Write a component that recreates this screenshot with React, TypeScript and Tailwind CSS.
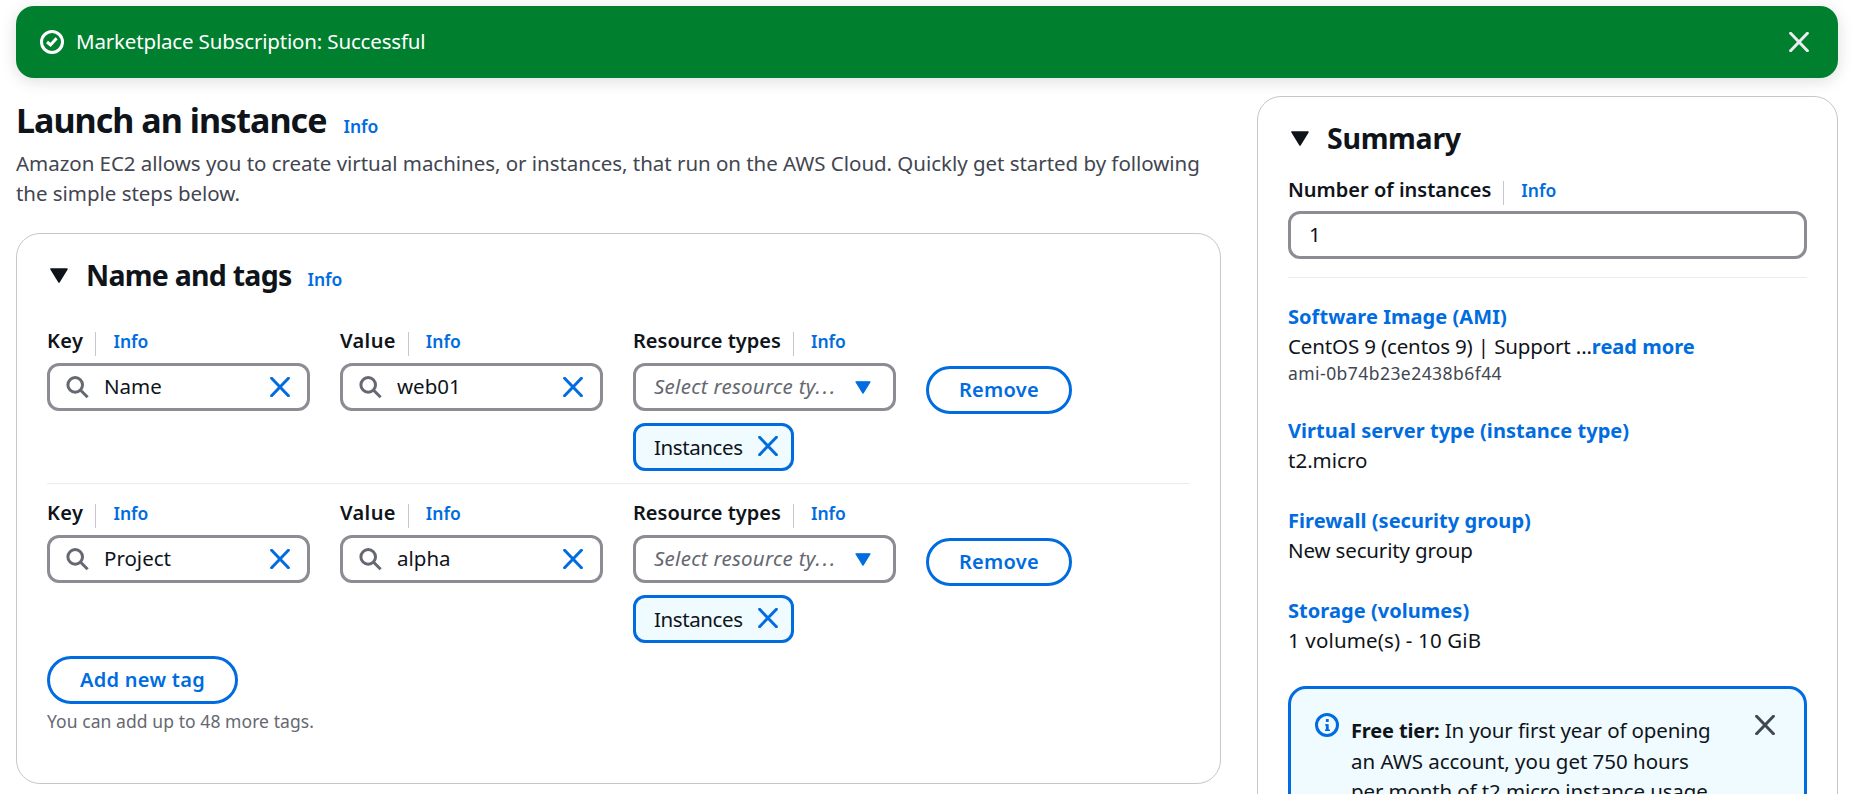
import type { ReactNode } from "react";

function CloseIcon({ className }: { className: string }) {
  return (
    <svg viewBox="0 0 20 20" className={`h-5 w-5 shrink-0 ${className}`} fill="none" stroke="currentColor" strokeWidth="3" strokeLinecap="round">
      <path d="M1.6 1.3 18.4 18.7M18.4 1.3 1.6 18.7" />
    </svg>
  );
}

function SearchIcon() {
  return (
    <svg viewBox="0 0 24 24" className="h-6 w-6 shrink-0 text-[#656871]" fill="none" stroke="currentColor" strokeWidth="3">
      <circle cx="9.2" cy="9.9" r="7.3" />
      <path d="M14.4 15 21.6 22.2" />
    </svg>
  );
}

function CheckCircleIcon() {
  return (
    <svg viewBox="0 0 24 24" className="h-6 w-6 shrink-0 text-white" fill="none" stroke="currentColor" strokeWidth="3">
      <circle cx="12" cy="12" r="10.5" />
      <path d="M7 12 10.5 15 16.6 8.2" />
    </svg>
  );
}

function InfoCircleIcon() {
  return (
    <svg viewBox="0 0 24 24" className="h-6 w-6 shrink-0 text-[#006ce0]" fill="none" stroke="currentColor" strokeWidth="3">
      <circle cx="12" cy="12" r="10.5" />
      <path d="M12.3 18v-6.8M12.3 6v3" strokeWidth="2.8" />
      <path d="M10 11.9h2.5M10 17.2h5" strokeWidth="1.4" />
    </svg>
  );
}

function Caret({ className }: { className: string }) {
  return (
    <svg viewBox="0 0 18 15" className={`shrink-0 ${className}`} fill="currentColor" stroke="currentColor" strokeWidth="1.5" strokeLinejoin="round">
      <path d="M1 1H17L9 14Z" />
    </svg>
  );
}

function InfoLink({ className = "" }: { className?: string }) {
  return <a className={`text-[17.5px] font-semibold text-[#006ce0] ${className}`}>Info</a>;
}

function FieldLabel({ children }: { children: ReactNode }) {
  return (
    <div className="flex h-[31px] items-baseline pt-px leading-[30px]">
      <span className="text-[20px] font-semibold text-[#0f141a]">{children}</span>
      <span className="ml-3 h-6 w-px self-end bg-[#c6c6cd]" />
      <InfoLink className="ml-[17px]" />
    </div>
  );
}

function SearchField({ label, value }: { label: ReactNode; value: string }) {
  return (
    <div className="w-[263px]">
      <FieldLabel>{label}</FieldLabel>
      <div className="mt-[7px] flex h-12 items-center rounded-xl border-[3px] border-[#8c8c94] bg-white pl-4 pr-[17px]">
        <SearchIcon />
        <span className="ml-[14px] flex-1 pb-[2px] leading-[30px] text-[#0f141a]">{value}</span>
        <CloseIcon className="text-[#006ce0]" />
      </div>
    </div>
  );
}

function TagRow({ name, value }: { name: string; value: string }) {
  return (
    <div className="flex gap-[30px]">
      <SearchField label={<span className="tracking-[0.4px]">Key</span>} value={name} />
      <SearchField label={<span className="tracking-[0.35px]">Value</span>} value={value} />
      <div className="w-[263px]">
        <FieldLabel>Resource types</FieldLabel>
        <div className="mt-[7px] flex h-12 items-center justify-between rounded-xl border-[3px] border-[#8c8c94] bg-white pl-[18px] pr-[22px]">
          <span className="whitespace-nowrap pb-[2px] italic leading-[30px] tracking-[0.27px] text-[#656871]">
            Select resource ty<span className="tracking-[2px]">...</span>
          </span>
          <Caret className="h-[13px] w-4 text-[#006ce0]" />
        </div>
        <div className="mt-3 flex h-12 w-[161px] items-center justify-between rounded-xl border-[3px] border-[#006ce0] bg-[#f0fbff] pl-[18px] pr-[13px]">
          <span className="leading-[30px] tracking-[-0.4px] text-[#0f141a]">Instances</span>
          <CloseIcon className="mb-[3px] text-[#006ce0]" />
        </div>
      </div>
      <button className="mt-[41px] h-12 w-[146px] rounded-full border-[3px] border-[#006ce0] text-[20px] font-semibold leading-[30px] tracking-[0.28px] text-[#006ce0]">
        Remove
      </button>
    </div>
  );
}

function SummaryItem({ title, children, className = "" }: { title: string; children: ReactNode; className?: string }) {
  return (
    <div className={`leading-[30px] ${className}`}>
      <div className="h-[30px] pt-px text-[20px] font-bold tracking-[0.05px] text-[#006ce0]">{title}</div>
      {children}
    </div>
  );
}

export default function App() {
  return (
    <div className="h-[794px] w-[1854px] overflow-hidden bg-white pl-4 pt-[6px] font-['Noto_Sans',sans-serif] text-[20.5px] text-[#0f141a]">
      <div className="flex h-[72px] w-[1822px] items-center rounded-[18px] bg-[#00802f] pl-6 pr-[29px] shadow-[0_3px_15px_1px_rgba(0,7,22,0.12)]">
        <CheckCircleIcon />
        <span className="ml-3 flex-1 pb-[3px] leading-[30px] tracking-[-0.17px] text-white">
          Marketplace Subscription: Successful
        </span>
        <CloseIcon className="text-[#ebebf0]" />
      </div>

      <div className="flex gap-9">
        <main className="w-[1205px] pt-5">
          <div className="flex h-[45px] items-baseline leading-[45px]">
            <h1 className="text-[34px] font-bold tracking-[-0.96px]">Launch an instance</h1>
            <InfoLink className="ml-[17px]" />
          </div>
          <p className="mt-[5px] h-[60px] whitespace-nowrap leading-[30px] tracking-[-0.035px] text-[#424650]">
            Amazon EC2 allows you to create virtual machines, or instances, that run on the AWS Cloud. Quickly get started by following
            <br />
            the simple steps below.
          </p>

          <section className="mt-[25px] h-[551px] rounded-3xl border border-[#c6c6cd] px-[30px] pt-[23px]">
            <div className="flex h-9 items-baseline leading-9">
              <Caret className="ml-[3px] h-[15px] w-[18px] -translate-y-[3px]" />
              <h2 className="ml-[18px] text-[28.5px] font-bold tracking-[-0.75px]">Name and tags</h2>
              <InfoLink className="ml-4" />
            </div>
            <div className="mt-8">
              <TagRow name="Name" value="web01" />
            </div>
            <div className="mb-[13px] mt-3 h-px bg-[#ebebf0]" />
            <TagRow name="Project" value="alpha" />
            <button className="mt-[13px] block h-12 w-[191px] rounded-full border-[3px] border-[#006ce0] text-[20px] font-semibold leading-[30px] tracking-[0.28px] text-[#006ce0]">
              Add new tag
            </button>
            <p className="mt-[5px] text-[17.5px] leading-6 tracking-[0.07px] text-[#656871]">You can add up to 48 more tags.</p>
          </section>
        </main>

        <aside className="mt-[18px] h-[760px] w-[581px] rounded-3xl border border-[#c6c6cd] px-[30px] pt-[23px]">
          <div className="flex h-9 items-baseline leading-9">
            <Caret className="ml-[3px] h-[15px] w-[18px] -translate-y-[3px]" />
            <h2 className="ml-[18px] text-[28.5px] font-bold tracking-[-0.3px]">Summary</h2>
          </div>
          <div className="mt-[18px]">
            <FieldLabel>Number of instances</FieldLabel>
          </div>
          <div className="mt-[6px] h-12 rounded-xl border-[3px] border-[#8c8c94] pl-[18px] pt-[5px] leading-[30px]">1</div>
          <div className="mt-[18px] h-px bg-[#ebebf0]" />

          <SummaryItem title="Software Image (AMI)" className="mt-[23px]">
            <div className="h-[30px]">
              <span className="tracking-[-0.14px]">CentOS 9 (centos 9) | Support ...</span>
              <span className="text-[20px] font-bold text-[#006ce0]">read more</span>
            </div>
            <div className="text-[17.5px] leading-6 tracking-[0.45px] text-[#424650]">ami-0b74b23e2438b6f44</div>
          </SummaryItem>
          <SummaryItem title="Virtual server type (instance type)" className="mt-[30px]">
            <div>t2.micro</div>
          </SummaryItem>
          <SummaryItem title="Firewall (security group)" className="mt-[30px]">
            <div className="tracking-[-0.15px]">New security group</div>
          </SummaryItem>
          <SummaryItem title="Storage (volumes)" className="mt-[30px]">
            <div className="tracking-[0.15px]">1 volume(s) - 10 GiB</div>
          </SummaryItem>

          <div className="mt-[31px] flex h-[240px] items-start rounded-[18px] border-[3px] border-[#006ce0] bg-[#f0fbff] pl-6 pr-[29px] pt-6">
            <InfoCircleIcon />
            <p className="ml-3 mt-[2px] flex-1 whitespace-nowrap leading-[30px] tracking-[-0.13px]">
              <span className="text-[20px] font-bold">Free tier:</span> In your first year of opening
              <br />
              <span className="tracking-[-0.03px]">an AWS account, you get 750 hours</span>
              <br />
              per month of t2.micro instance usage
            </p>
            <CloseIcon className="mt-[2px] text-[#424650]" />
          </div>
        </aside>
      </div>
    </div>
  );
}
